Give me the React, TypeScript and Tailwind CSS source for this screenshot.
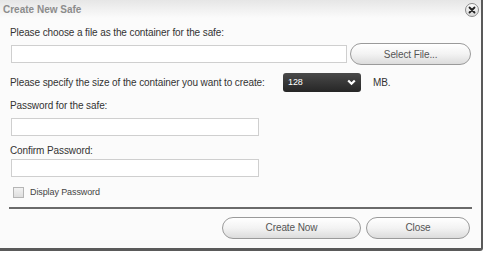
import React from "react";

const font = { fontFamily: '"Liberation Sans", Arial, sans-serif' };

function Field({ w }: { w: string }) {
  return <div className={`${w} h-[18px] border border-[#cfcfcf] bg-white`} />;
}

function Pill({ label, w, extra = "" }: { label: string; w: string; extra?: string }) {
  return (
    <div
      className={`${w} h-[22px] rounded-full border border-[#9a9a9a] bg-gradient-to-b from-white via-[#f3f3f3] to-[#dcdcdc] flex items-center justify-center text-[10px] text-[#555] ${extra}`}
    >
      {label}
    </div>
  );
}

export default function App() {
  return (
    <div className="w-[486px] h-[256px] bg-white relative overflow-hidden" style={font}>
      <div className="w-[483px] h-[251px] bg-[#fbfbfb] border-r-[2px] border-b-[3px] border-[#5a5a5a] rounded-br-[3px] flex flex-col">
        <div className="h-[18px] shrink-0 flex items-center justify-between pl-[3px] pr-[2px] bg-gradient-to-b from-[#e6e6e6] to-[#fbfbfb]">
          <span className="text-[10px] font-bold text-[#8c8c8c] mt-[1px]">Create New Safe</span>
          <div className="w-[14px] h-[14px] rounded-full border border-[#8a8a8a] bg-gradient-to-b from-white to-[#d8d8d8] flex items-center justify-center mt-[1px]">
            <svg width="8" height="8" viewBox="0 0 8 8">
              <path d="M1.5 1.5 L6.5 6.5 M6.5 1.5 L1.5 6.5" stroke="#222" strokeWidth="1.8" strokeLinecap="round" />
            </svg>
          </div>
        </div>
        <div className="px-[10px] flex flex-col text-[10px] text-[#333] whitespace-nowrap tracking-[-0.1px]">
          <div className="mt-[8px] leading-[13px]">Please choose a file as the container for the safe:</div>
          <div className="mt-[4px] flex items-center gap-[3px] pl-[1px]">
            <Field w="w-[337px]" />
            <Pill label="Select File..." w="w-[121px]" extra="h-[19px]" />
          </div>
          <div className="mt-[8px] flex items-center h-[19px]">
            <span className="w-[273px]">Please specify the size of the container you want to create:</span>
            <div className="w-[78px] h-[19px] rounded-[3px] bg-gradient-to-b from-[#4a4a4a] to-[#262626] flex items-center justify-between px-[5px] text-white text-[9px]">
              <span>128</span>
              <svg width="9" height="7" viewBox="0 0 9 7">
                <path d="M1.2 1.5 L4.5 4.8 L7.8 1.5" stroke="white" strokeWidth="2.2" fill="none" />
              </svg>
            </div>
            <span className="ml-[12px]">MB.</span>
          </div>
          <div className="mt-[7px] leading-[13px]">Password for the safe:</div>
          <div className="mt-[6px] pl-[1px]"><Field w="w-[248px]" /></div>
          <div className="mt-[8px] leading-[13px]">Confirm Password:</div>
          <div className="mt-[2px] pl-[1px]"><Field w="w-[248px]" /></div>
          <div className="mt-[9px] flex items-center gap-[6px] pl-[3px]">
            <div className="w-[11px] h-[11px] border border-[#b5b5b5] bg-gradient-to-b from-[#f2f2f2] to-[#dedede]" />
            <span className="text-[9px] text-[#444]">Display Password</span>
          </div>
          <div className="mt-[7px] h-[2px] bg-[#6a6a6a] w-[463px] ml-[-1px]" />
          <div className="mt-[8px] flex justify-end gap-[5px] pr-[1px]">
            <Pill label="Create Now" w="w-[139px]" />
            <Pill label="Close" w="w-[104px]" />
          </div>
        </div>
      </div>
    </div>
  );
}
